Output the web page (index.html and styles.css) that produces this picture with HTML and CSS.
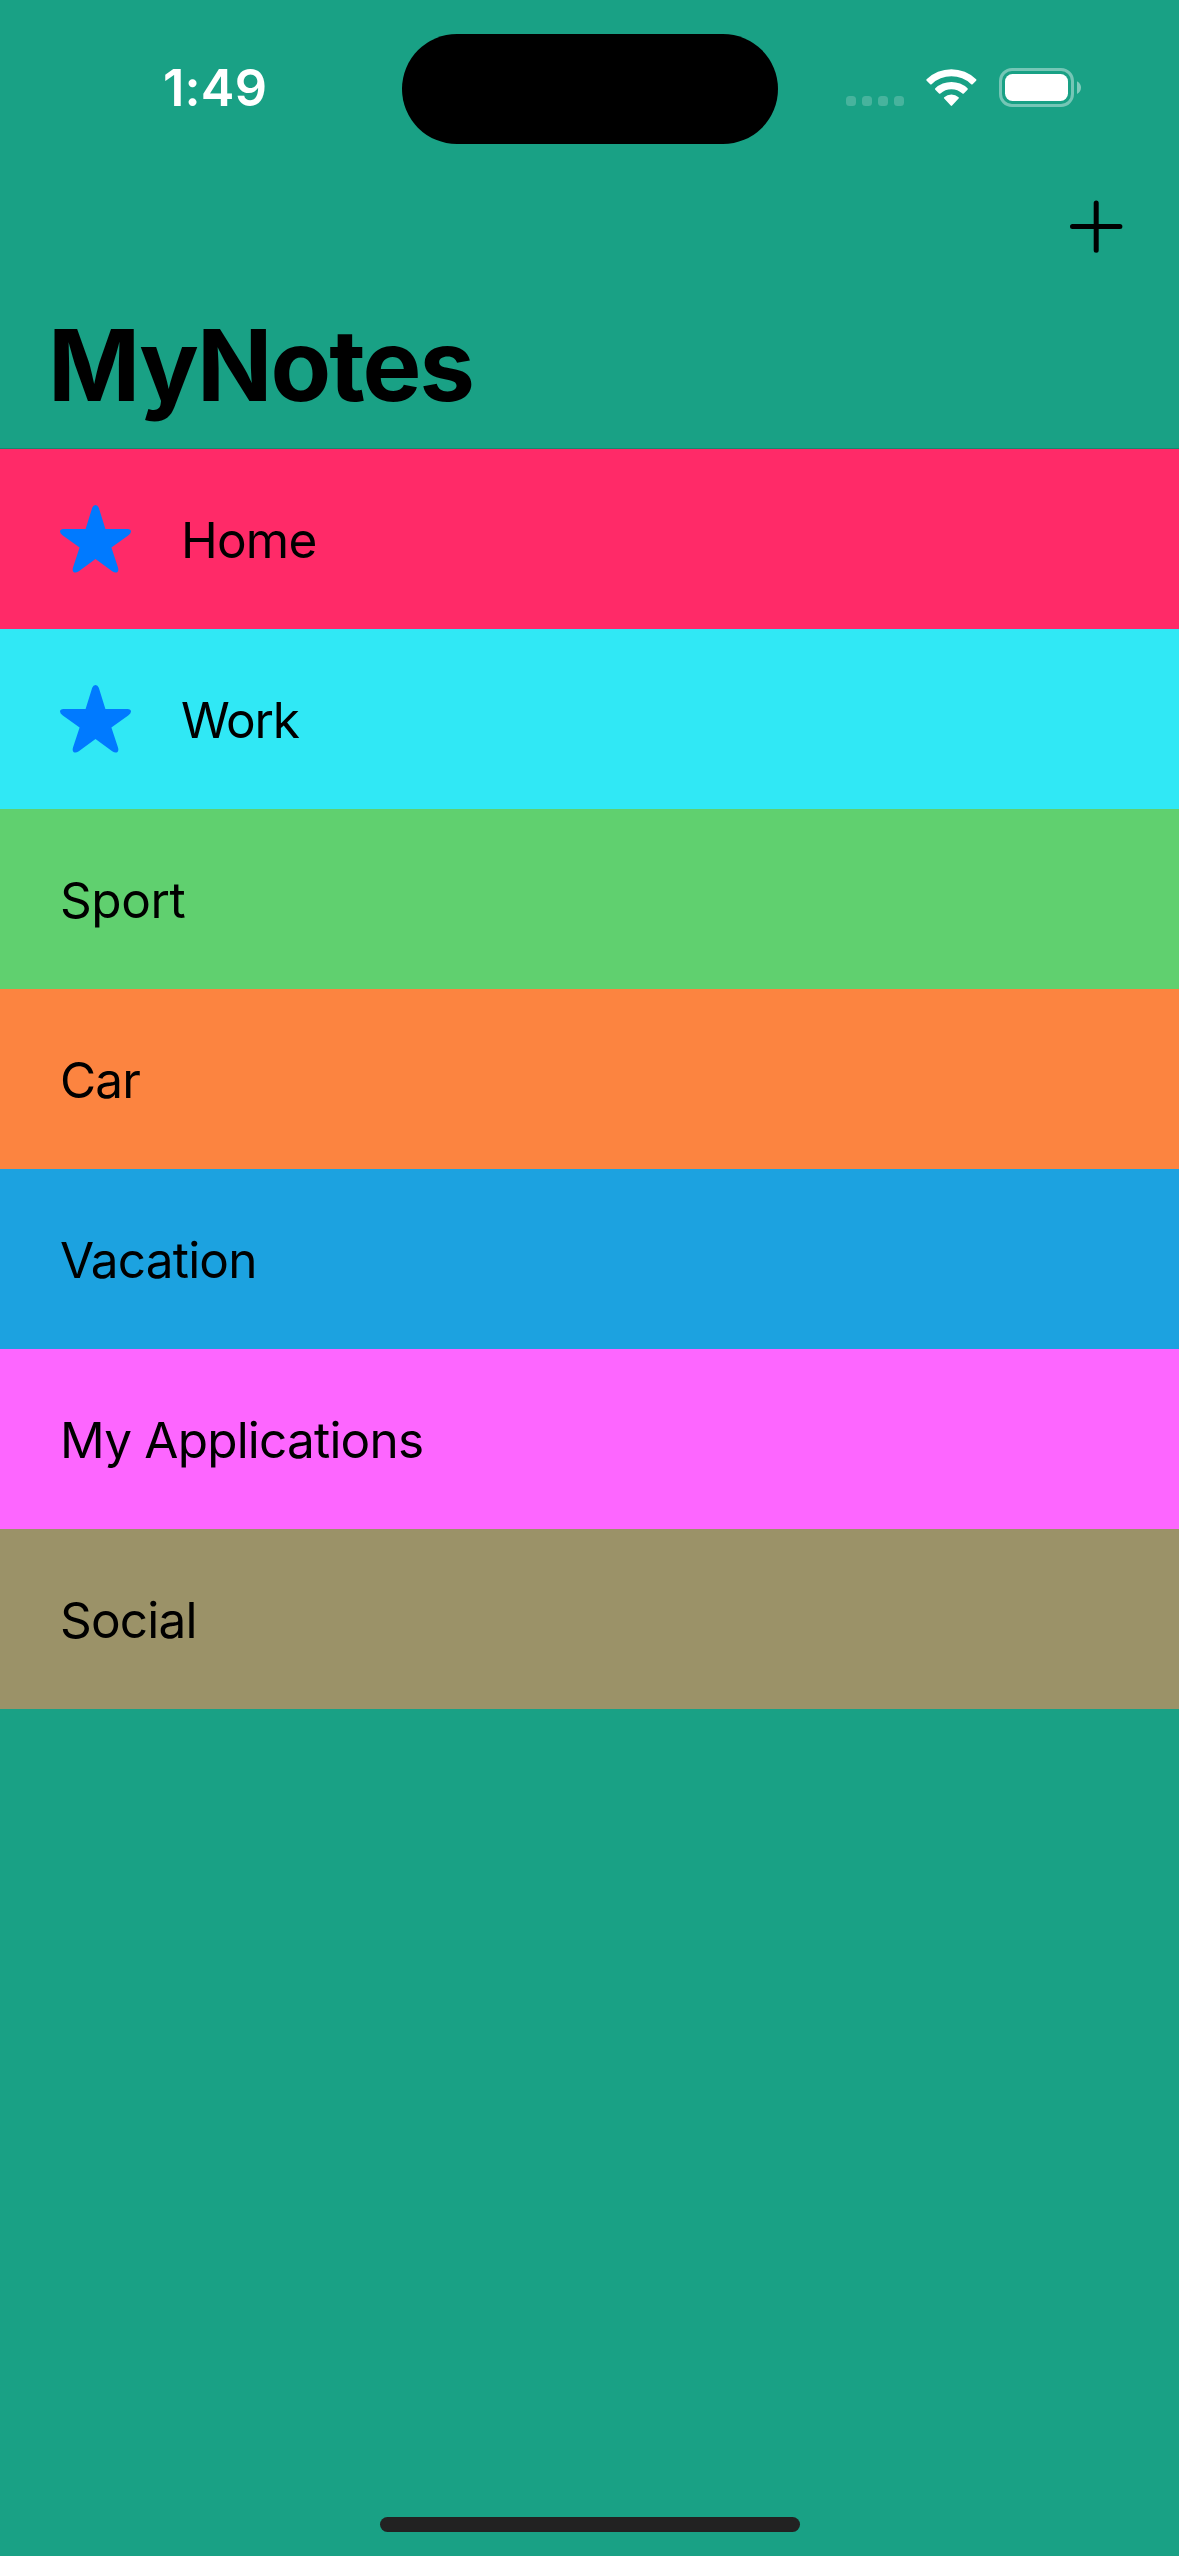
FILE: index.html
```html
<!DOCTYPE html>
<html lang="en">
<head>
<meta charset="utf-8">
<title>MyNotes</title>
<link rel="stylesheet" href="styles.css">
</head>
<body>
<div class="screen">
  <div class="status-bar">
    <time class="clock">1:49</time>
    <div class="island"></div>
    <div class="indicators">
      <div class="cellular"><i></i><i></i><i></i><i></i></div>
      <svg class="wifi" viewBox="0 0 51 38" fill="#fff">
        <path d="M.6 10.3Q0 11 .7 11.7L4.2 15.2Q4.9 15.9 5.6 15.2A28.8 28.8 0 0 1 45.2 15.2Q45.9 15.9 46.6 15.2L50.1 11.7Q50.8 11 50.1 10.3A35.2 35.2 0 0 0 .6 10.3Z"/>
        <path d="M9.3 19.3Q8.6 20 9.3 20.7L13 24.4Q13.6 25 14.4 24.4A16.3 16.3 0 0 1 36.4 24.4Q37.2 25 37.8 24.4L41.5 20.7Q42.2 20 41.5 19.3A23.4 23.4 0 0 0 9.3 19.3Z"/>
        <path d="M18.2 28.2Q17.5 28.9 18.2 29.6L24.7 36.6Q25.4 37.3 26.1 36.6L32.6 29.6Q33.3 28.9 32.6 28.2A10.7 10.7 0 0 0 18.2 28.2Z"/>
      </svg>
      <svg class="battery" viewBox="0 0 82 39">
        <rect x="1.5" y="1.5" width="72" height="36" rx="11.5" fill="none" stroke="#fff" stroke-opacity=".4" stroke-width="3"/>
        <rect x="6" y="6" width="63" height="27" rx="7.5" fill="#fff"/>
        <path d="M78 13.2Q82 15.5 82 19.5T78 26Z" fill="#fff" fill-opacity=".45"/>
      </svg>
    </div>
  </div>
  <header class="nav">
    <button class="add" aria-label="Add">
      <svg viewBox="0 0 53 53" stroke="#000" stroke-width="5" stroke-linecap="round"><path d="M26.2 2.9V50.3M2.5 26.6H49.9"/></svg>
    </button>
    <h1 class="title">MyNotes</h1>
  </header>
  <ul class="notes">
    <li class="note home"><svg class="star" viewBox="0 0 71 68"><path d="M32.2 2.8Q33.3 0 35.5 0T38.8 2.8L45.4 24H67.5Q71 24.2 71 26.5 71 28.4 68.2 30.4L51.4 42.6 58 62.5Q59 66 57.2 67.2 55.2 68.3 52.2 66.2L35.5 54 18.8 66.2Q15.8 68.3 13.8 67.2 12 66 13 62.5L19.6 42.6 2.8 30.4Q0 28.4 0 26.5 0 24.2 3.5 24H25.6Z"/></svg><span>Home</span></li>
    <li class="note work"><svg class="star" viewBox="0 0 71 68"><path d="M32.2 2.8Q33.3 0 35.5 0T38.8 2.8L45.4 24H67.5Q71 24.2 71 26.5 71 28.4 68.2 30.4L51.4 42.6 58 62.5Q59 66 57.2 67.2 55.2 68.3 52.2 66.2L35.5 54 18.8 66.2Q15.8 68.3 13.8 67.2 12 66 13 62.5L19.6 42.6 2.8 30.4Q0 28.4 0 26.5 0 24.2 3.5 24H25.6Z"/></svg><span>Work</span></li>
    <li class="note sport"><span>Sport</span></li>
    <li class="note car"><span>Car</span></li>
    <li class="note vacation"><span>Vacation</span></li>
    <li class="note applications"><span>My Applications</span></li>
    <li class="note social"><span>Social</span></li>
  </ul>
  <div class="home-indicator"></div>
</div>
</body>
</html>
```

FILE: styles.css
```css
* { box-sizing: border-box; margin: 0; padding: 0; }

body {
  background: #19a185;
  color: #000;
  font-family: Inter, "Liberation Sans", sans-serif;
}

svg { display: block; flex: none; }

.screen {
  display: flex;
  flex-direction: column;
  width: 1179px;
  height: 2556px;
  overflow: hidden;
}

.status-bar {
  display: grid;
  grid-template-columns: 401.5px 376px 1fr;
  height: 177px;
  padding-top: 33.5px;
}

.clock {
  padding-left: 163px;
  color: #fff;
  font-size: 50.5px;
  font-weight: 600;
  line-height: 108px;
  letter-spacing: 0.2px;
}

.island {
  height: 110.5px;
  border-radius: 56px;
  background: #000;
}

.indicators {
  display: flex;
  align-items: flex-start;
  padding: 34.5px 0 0 68.5px;
}

.cellular { display: flex; gap: 6px; padding-top: 28px; }

.cellular i {
  width: 10px;
  height: 10px;
  border-radius: 3.5px;
  background: rgba(255, 255, 255, 0.2);
}

.wifi { width: 51px; height: 38px; margin: 1px 0 0 22px; }

.battery { width: 82px; height: 39px; margin-left: 22px; }

.nav {
  display: flex;
  flex-direction: column;
  height: 272px;
  padding: 23px 56px 0 48px;
}

.add {
  align-self: flex-end;
  width: 53px;
  height: 53px;
  border: 0;
  background: none;
}

.title {
  margin-top: 52px;
  font-size: 99px;
  font-weight: 700;
  line-height: 120px;
  letter-spacing: -2px;
}

.notes { list-style: none; box-shadow: 0 -0.5px 0 rgba(0, 0, 0, 0.3); }

.note {
  display: flex;
  align-items: center;
  gap: 50px;
  height: 180px;
  padding: 2px 60px 0;
  font-size: 49.5px;
  line-height: 60px;
  letter-spacing: -0.8px;
}

.star { width: 71px; height: 68px; margin-bottom: 2px; fill: #007aff; }

.home { background: #ff2a68; }
.work { background: #30e8f5; letter-spacing: -1.2px; }
.sport { background: #60d06f; letter-spacing: -0.4px; }
.car { background: #fc8440; }
.vacation { background: #1ca2e0; letter-spacing: -0.8px; }
.applications { background: #fd66ff; }
.social { background: #9b9268; }

.home-indicator {
  width: 420px;
  height: 15px;
  margin: auto auto 24px 380px;
  border-radius: 7.5px;
  background: #222;
}
```
